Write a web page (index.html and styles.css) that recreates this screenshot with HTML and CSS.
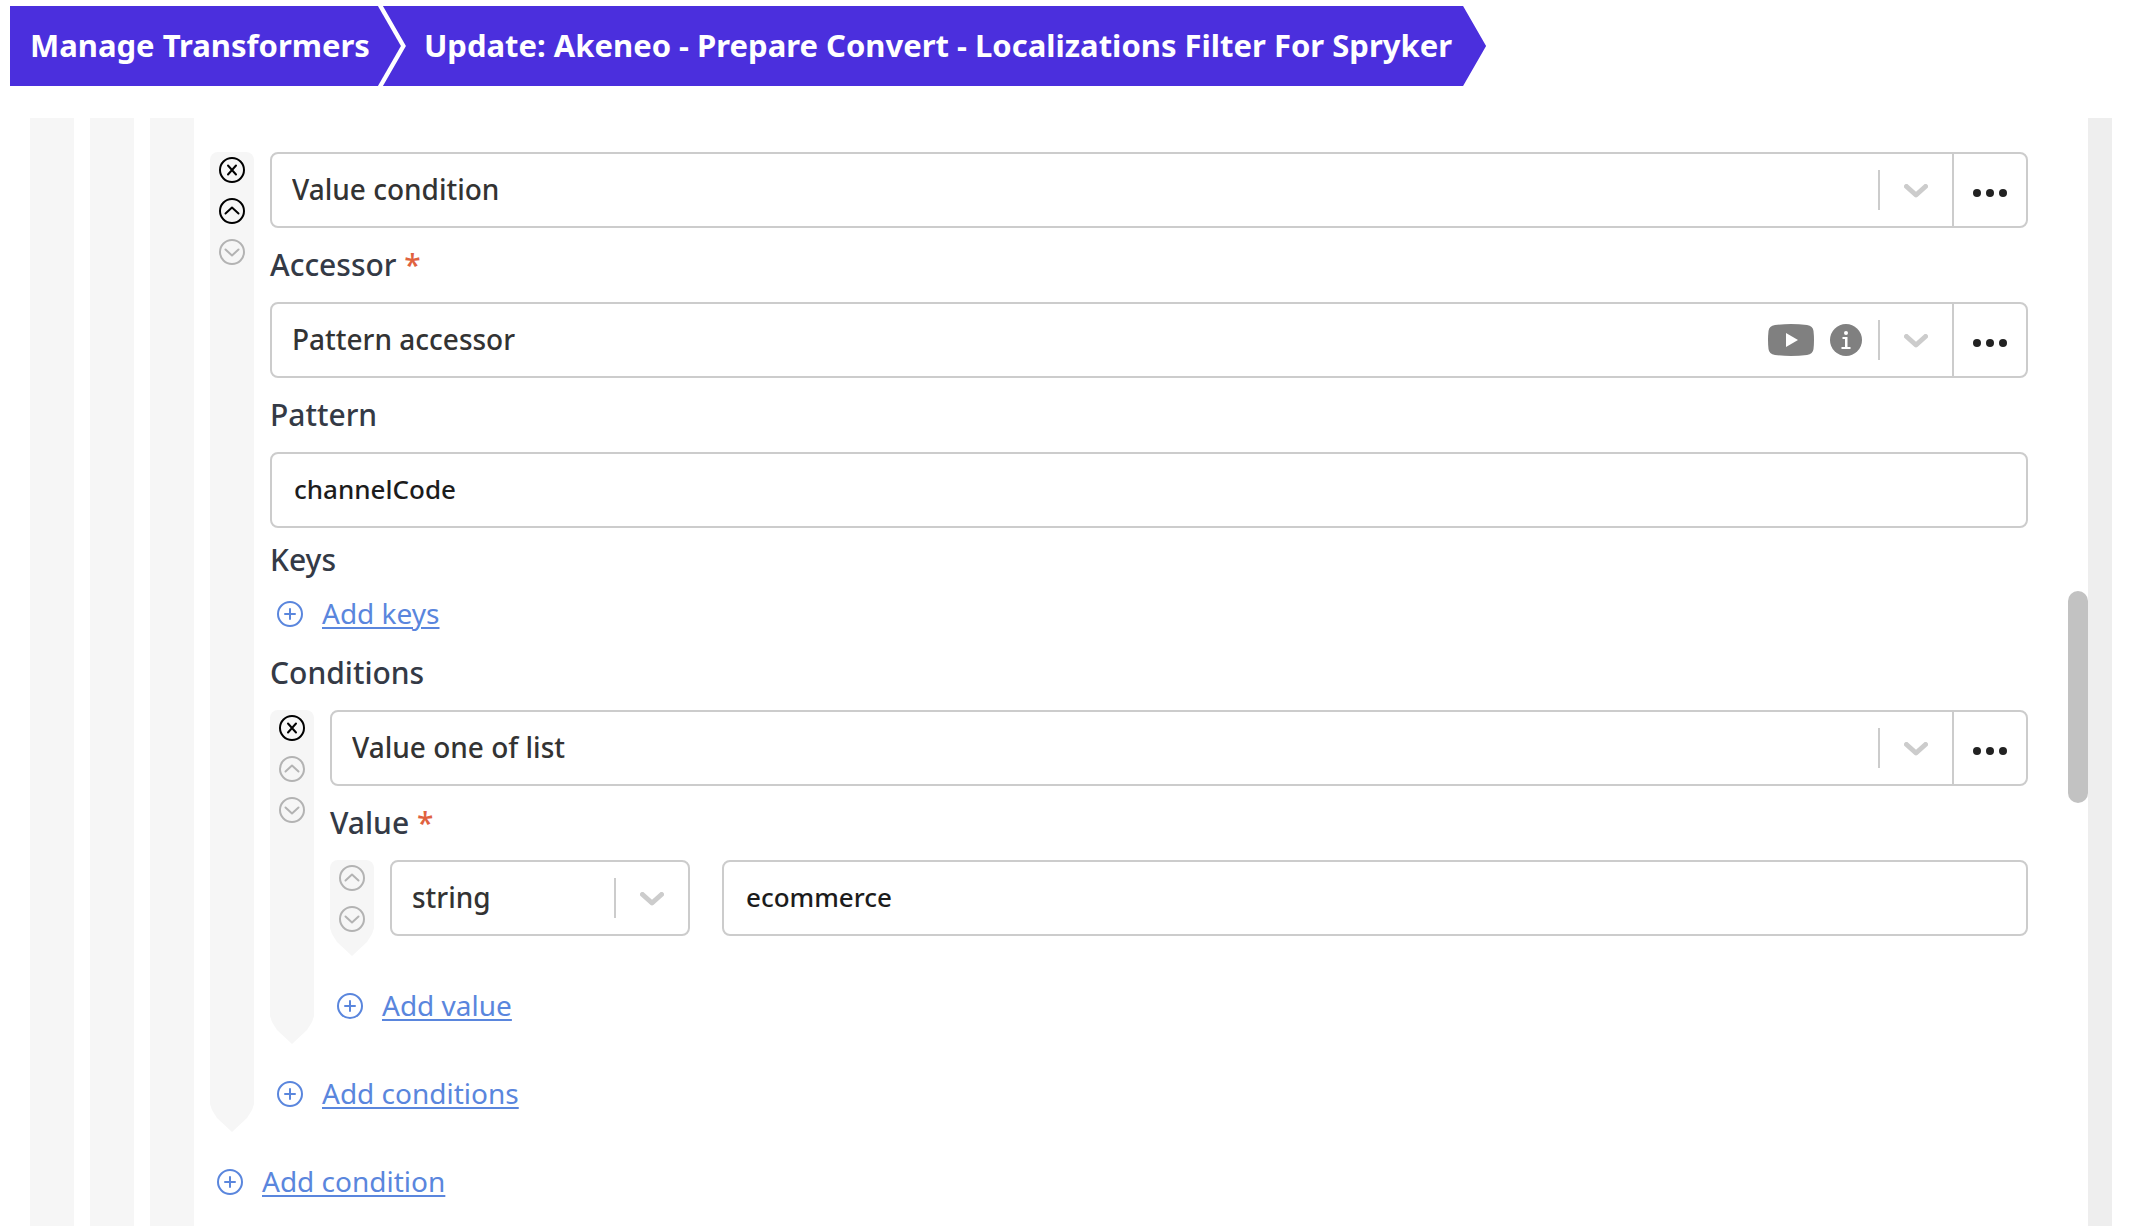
FILE: index.html
```html
<!DOCTYPE html>
<html lang="en">
<head>
    <meta charset="UTF-8">
    <meta name="viewport" content="width=device-width, initial-scale=1.0">
    <title>Update: Akeneo - Prepare Convert - Localizations Filter For Spryker</title>
    <link rel="stylesheet" href="styles.css">
</head>
<body>
    <!-- shared icons -->
    <svg class="sprite" aria-hidden="true">
        <symbol id="icon-remove" viewBox="0 0 26 26">
            <circle cx="13" cy="13" r="12"/>
            <path d="M9 8.500l8 9M17 8.500l-8 9"/>
        </symbol>
        <symbol id="icon-up" viewBox="0 0 26 26">
            <circle cx="13" cy="13" r="12"/>
            <path d="M6.5 15.5l6.5-6 6.5 6"/>
        </symbol>
        <symbol id="icon-down" viewBox="0 0 26 26">
            <circle cx="13" cy="13" r="12"/>
            <path d="M6.5 10.5l6.5 6 6.5-6"/>
        </symbol>
        <symbol id="icon-add" viewBox="0 0 26 26">
            <circle cx="13" cy="13" r="12"/>
            <path d="M13 8v10M8 13h10"/>
        </symbol>
        <symbol id="icon-chevron" viewBox="0 0 24 14">
            <path d="M2.5 2.5L12 11l9.5-8.5"/>
        </symbol>
        <symbol id="icon-dots" viewBox="0 0 34 8">
            <circle cx="4" cy="4" r="4"/>
            <circle cx="17" cy="4" r="4"/>
            <circle cx="30" cy="4" r="4"/>
        </symbol>
    </svg>

    <nav>
        <ol class="breadcrumb">
            <li><a href="#">Manage Transformers</a></li>
            <li><a href="#">Update: Akeneo - Prepare Convert - Localizations Filter For Spryker</a></li>
        </ol>
    </nav>

    <main class="panel">
        <div class="rail rail-outer"></div>
        <div class="rail rail-outer"></div>
        <div class="rail rail-outer"></div>

        <form class="editor">
            <div class="item">
                <div class="rail">
                    <button type="button" aria-label="Remove condition"><svg><use href="#icon-remove"/></svg></button>
                    <button type="button" aria-label="Move condition up"><svg><use href="#icon-up"/></svg></button>
                    <button type="button" aria-label="Move condition down" disabled><svg><use href="#icon-down"/></svg></button>
                </div>
                <div class="item-body">
                    <div class="field">
                        <select aria-label="Condition type"><option>Value condition</option></select>
                        <span class="arrow"><svg><use href="#icon-chevron"/></svg></span>
                        <button type="button" class="more" aria-label="More actions"><svg><use href="#icon-dots"/></svg></button>
                    </div>

                    <label class="label" for="accessor">Accessor <span class="required">*</span></label>
                    <div class="field">
                        <select id="accessor"><option>Pattern accessor</option></select>
                        <span class="hints">
                            <svg class="video" viewBox="0 0 46 32">
                                <path d="M7 1Q23-1 39 1Q45 2 45.5 7Q46.5 16 45.5 25Q45 30 39 31Q23 33 7 31Q1 30 .5 25Q-.5 16 .5 7Q1 2 7 1z"/>
                                <path class="cut" d="M18 9l12 7-12 7z"/>
                            </svg>
                            <svg class="info" viewBox="0 0 32 32">
                                <circle cx="16" cy="16" r="16"/>
                                <circle class="cut" cx="16" cy="9" r="2"/>
                                <path class="cut" d="M12.500 13h5v10h3v2h-9v-2h3.500v-8h-2.500z"/>
                            </svg>
                        </span>
                        <span class="arrow"><svg><use href="#icon-chevron"/></svg></span>
                        <button type="button" class="more" aria-label="More actions"><svg><use href="#icon-dots"/></svg></button>
                    </div>

                    <label class="label" for="pattern">Pattern</label>
                    <input class="field" type="text" id="pattern" value="channelCode">

                    <div class="label label-short">Keys</div>
                    <div class="add"><svg><use href="#icon-add"/></svg><a href="#">Add keys</a></div>

                    <div class="label">Conditions</div>
                    <div class="item">
                        <div class="rail">
                            <button type="button" aria-label="Remove condition"><svg><use href="#icon-remove"/></svg></button>
                            <button type="button" aria-label="Move condition up" disabled><svg><use href="#icon-up"/></svg></button>
                            <button type="button" aria-label="Move condition down" disabled><svg><use href="#icon-down"/></svg></button>
                        </div>
                        <div class="item-body">
                            <div class="field">
                                <select aria-label="Condition type"><option>Value one of list</option></select>
                                <span class="arrow"><svg><use href="#icon-chevron"/></svg></span>
                                <button type="button" class="more" aria-label="More actions"><svg><use href="#icon-dots"/></svg></button>
                            </div>

                            <label class="label" for="value">Value <span class="required">*</span></label>
                            <div class="item">
                                <div class="rail">
                                    <button type="button" aria-label="Move value up" disabled><svg><use href="#icon-up"/></svg></button>
                                    <button type="button" aria-label="Move value down" disabled><svg><use href="#icon-down"/></svg></button>
                                </div>
                                <div class="item-body value-row">
                                    <div class="field value-type">
                                        <select aria-label="Value type"><option>string</option></select>
                                        <span class="arrow"><svg><use href="#icon-chevron"/></svg></span>
                                    </div>
                                    <input class="field" type="text" id="value" value="ecommerce">
                                </div>
                            </div>
                            <div class="add add-after"><svg><use href="#icon-add"/></svg><a href="#">Add value</a></div>
                        </div>
                    </div>
                    <div class="add add-after"><svg><use href="#icon-add"/></svg><a href="#">Add conditions</a></div>
                </div>
            </div>
            <div class="add add-after"><svg><use href="#icon-add"/></svg><a href="#">Add condition</a></div>
        </form>

        <div class="scroll-thumb"></div>
    </main>
</body>
</html>
```
FILE: styles.css
```css
* {
    box-sizing: border-box;
}
body {
    margin: 0;
    height: 100vh;
    padding: 6px 22px 0 10px;
    display: flex;
    flex-direction: column;
    overflow: hidden;
    background-color: #fff;
    font-family: "Noto Sans", sans-serif;
    font-weight: 500;
}
svg {
    display: block;
    fill: none;
    stroke: currentColor;
    stroke-width: 2;
    stroke-linecap: round;
    stroke-linejoin: round;
}
.sprite {
    position: absolute;
    width: 0;
    height: 0;
}

/* breadcrumb */
.breadcrumb {
    display: flex;
    margin: 0 0 32px;
    padding: 0;
    list-style: none;
}
.breadcrumb a {
    display: block;
    padding: 0 31px 2px 20px;
    background-color: #4b2fdd;
    color: #fff;
    font-size: 31px;
    font-weight: 700;
    line-height: 78px;
    text-decoration: none;
    white-space: nowrap;
    clip-path: polygon(0 0, calc(100% - 23px) 0, 100% 50%, calc(100% - 23px) 100%, 0 100%);
}
.breadcrumb li + li {
    margin-left: -18px;
}
.breadcrumb li + li a {
    padding-left: 41px;
    padding-right: 34px;
    clip-path: polygon(0 0, calc(100% - 23px) 0, 100% 50%, calc(100% - 23px) 100%, 0 100%, 23px 50%);
}

/* scrolled panel */
.panel {
    position: relative;
    flex: 1;
    min-height: 0;
    display: flex;
    gap: 16px;
    padding-left: 20px;
    border-right: 24px solid #eee;
    overflow: hidden;
}
.editor {
    flex: 1;
    padding: 34px 60px 22px 0;
}
.scroll-thumb {
    position: absolute;
    top: calc(43% - 3px);
    right: 0;
    width: 20px;
    height: 212px;
    border-radius: 10px;
    background-color: #c2c2c2;
}

/* nested items */
.item {
    display: flex;
    gap: 16px;
}
.item-body {
    flex: 1;
    min-width: 0;
    padding-bottom: 16px;
}
.rail {
    flex: none;
    width: 44px;
    display: flex;
    flex-direction: column;
    align-items: center;
    gap: 15px;
    padding: 5px 0 24px;
    border-radius: 8px 8px 0 0;
    background-color: #f6f6f6;
    clip-path: polygon(0 0, 100% 0, 100% calc(100% - 28px), calc(100% - 2px) calc(100% - 22px), calc(100% - 7px) calc(100% - 14px), 50% 100%, 7px calc(100% - 14px), 2px calc(100% - 22px), 0 calc(100% - 28px));
}
.rail-outer {
    border-radius: 0;
    clip-path: none;
}
.rail button {
    width: 26px;
    height: 26px;
    padding: 0;
    border: none;
    background: none;
    color: #000;
    cursor: pointer;
}
.rail button:disabled {
    color: #b3b3b3;
    cursor: default;
}
.rail svg {
    width: 26px;
    height: 26px;
}

/* fields */
.label {
    display: block;
    color: #343a46;
    font-size: 30px;
    line-height: 74px;
}
.label-short {
    line-height: 64px;
}
.required {
    color: #e0623f;
}
.field {
    display: flex;
    align-items: center;
    width: 100%;
    height: 76px;
    border: 2px solid #ccc;
    border-radius: 8px;
    background-color: #fff;
}
input.field {
    padding: 0 22px 2px;
    color: #1c1c1c;
    font: inherit;
    font-size: 26px;
}
.field select {
    flex: 1;
    align-self: stretch;
    min-width: 0;
    padding: 0 20px 2px;
    border: none;
    appearance: none;
    background: none;
    color: #333;
    font: inherit;
    font-size: 28px;
}
.arrow {
    width: 74px;
    height: 40px;
    display: flex;
    align-items: center;
    justify-content: center;
    padding-top: 2px;
    border-left: 2px solid #ccc;
    color: #ccc;
}
.arrow svg {
    width: 24px;
    height: 14px;
    stroke-width: 5;
}
.more {
    width: 74px;
    align-self: stretch;
    display: flex;
    align-items: center;
    justify-content: center;
    padding: 6px 0 0;
    border: none;
    border-left: 2px solid #ccc;
    background: none;
    color: #222;
    cursor: pointer;
}
.more svg {
    width: 34px;
    height: 8px;
    fill: currentColor;
    stroke: none;
}
.hints {
    display: flex;
    gap: 16px;
    margin-right: 16px;
}
.hints svg {
    height: 32px;
    fill: #808080;
    stroke: none;
}
.hints .cut {
    fill: #fff;
}
.video {
    width: 46px;
}
.info {
    width: 32px;
}
.value-row {
    display: flex;
    gap: 32px;
}
.value-type {
    flex: none;
    width: 300px;
}

/* add links */
.add {
    display: flex;
    align-items: center;
    gap: 19px;
    height: 44px;
    padding-left: 7px;
    color: #5a86dd;
}
.add-after {
    margin-top: 28px;
}
.add svg {
    width: 26px;
    height: 26px;
}
.add a {
    padding-bottom: 2px;
    color: inherit;
    font-size: 28px;
    font-weight: 400;
    line-height: 42px;
    text-decoration-thickness: 2px;
    text-underline-offset: 3px;
}
```
